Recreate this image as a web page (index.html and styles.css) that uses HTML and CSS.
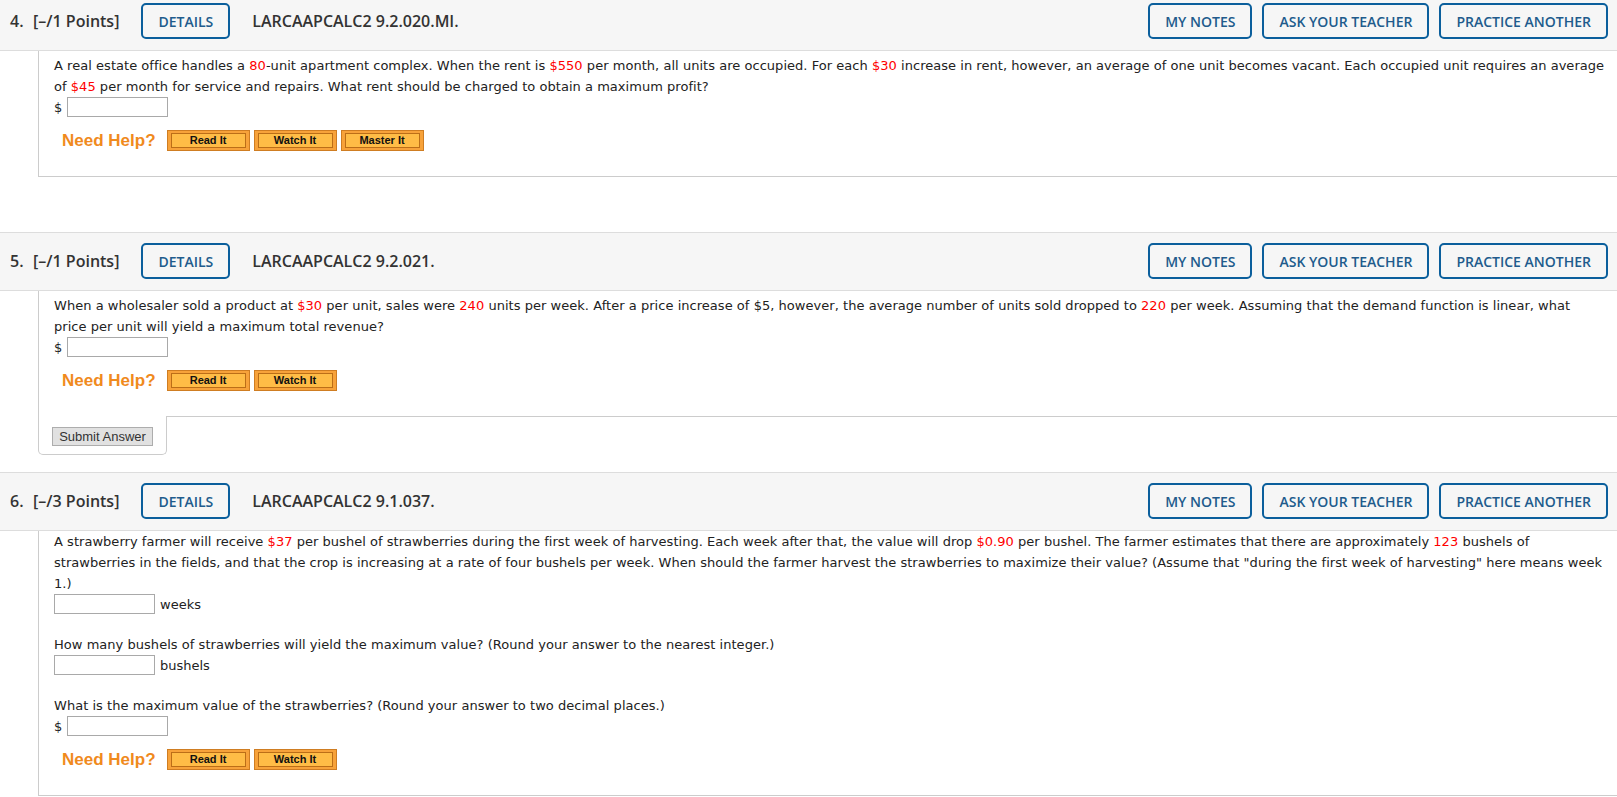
FILE: index.html
```html
<!DOCTYPE html>
<html lang="en">
<head>
<meta charset="utf-8">
<title>Assignment</title>
<link rel="stylesheet" href="styles.css">
</head>
<body>
<div class="page">

  <section class="question">
    <header class="q-head">
      <span class="q-num">4.</span>
      <span class="q-points">[–/1 Points]</span>
      <button class="btn-outline details">DETAILS</button>
      <span class="q-code">LARCAAPCALC2 9.2.020.MI.</span>
      <div class="q-actions">
        <button class="btn-outline">MY NOTES</button>
        <button class="btn-outline">ASK YOUR TEACHER</button>
        <button class="btn-outline">PRACTICE ANOTHER</button>
      </div>
    </header>
    <div class="q-body">
      <p class="q-text">A real estate office handles a <span class="red">80</span>-unit apartment complex. When the rent is <span class="red">$550</span> per month, all units are occupied. For each <span class="red">$30</span> increase in rent, however, an average of one unit becomes vacant. Each occupied unit requires an average of <span class="red">$45</span> per month for service and repairs. What rent should be charged to obtain a maximum profit?</p>
      <div class="answer-row"><span class="dollar">$</span><input class="ans" type="text"></div>
      <div class="help-row">
        <span class="need-help">Need Help?</span>
        <span class="help-btn"><span>Read It</span></span>
        <span class="help-btn"><span>Watch It</span></span>
        <span class="help-btn"><span>Master It</span></span>
      </div>
    </div>
  </section>

  <section class="question q-gap">
    <header class="q-head">
      <span class="q-num">5.</span>
      <span class="q-points">[–/1 Points]</span>
      <button class="btn-outline details">DETAILS</button>
      <span class="q-code">LARCAAPCALC2 9.2.021.</span>
      <div class="q-actions">
        <button class="btn-outline">MY NOTES</button>
        <button class="btn-outline">ASK YOUR TEACHER</button>
        <button class="btn-outline">PRACTICE ANOTHER</button>
      </div>
    </header>
    <div class="q-body open">
      <p class="q-text">When a wholesaler sold a product at <span class="red">$30</span> per unit, sales were <span class="red">240</span> units per week. After a price increase of $5, however, the average number of units sold dropped to <span class="red">220</span> per week. Assuming that the demand function is linear, what price per unit will yield a maximum total revenue?</p>
      <div class="answer-row"><span class="dollar">$</span><input class="ans" type="text"></div>
      <div class="help-row">
        <span class="need-help">Need Help?</span>
        <span class="help-btn"><span>Read It</span></span>
        <span class="help-btn"><span>Watch It</span></span>
      </div>
    </div>
    <div class="submit-row">
      <div class="submit-tab"><button class="submit-btn">Submit Answer</button></div>
      <div class="submit-fill"></div>
    </div>
  </section>

  <section class="question q-gap-small">
    <header class="q-head">
      <span class="q-num">6.</span>
      <span class="q-points">[–/3 Points]</span>
      <button class="btn-outline details">DETAILS</button>
      <span class="q-code">LARCAAPCALC2 9.1.037.</span>
      <div class="q-actions">
        <button class="btn-outline">MY NOTES</button>
        <button class="btn-outline">ASK YOUR TEACHER</button>
        <button class="btn-outline">PRACTICE ANOTHER</button>
      </div>
    </header>
    <div class="q-body multi">
      <p class="q-text">A strawberry farmer will receive <span class="red">$37</span> per bushel of strawberries during the first week of harvesting. Each week after that, the value will drop <span class="red">$0.90</span> per bushel. The farmer estimates that there are approximately <span class="red">123</span> bushels of strawberries in the fields, and that the crop is increasing at a rate of four bushels per week. When should the farmer harvest the strawberries to maximize their value? (Assume that "during the first week of harvesting" here means week 1.)</p>
      <div class="answer-row"><input class="ans" type="text"><span class="unit">weeks</span></div>
      <p class="q-text sub">How many bushels of strawberries will yield the maximum value? (Round your answer to the nearest integer.)</p>
      <div class="answer-row"><input class="ans" type="text"><span class="unit">bushels</span></div>
      <p class="q-text sub">What is the maximum value of the strawberries? (Round your answer to two decimal places.)</p>
      <div class="answer-row"><span class="dollar">$</span><input class="ans" type="text"></div>
      <div class="help-row">
        <span class="need-help">Need Help?</span>
        <span class="help-btn"><span>Read It</span></span>
        <span class="help-btn"><span>Watch It</span></span>
      </div>
    </div>
  </section>

</div>
</body>
</html>
```

FILE: styles.css
```css
* { box-sizing: border-box; }

body {
  margin: 0;
  background: #ffffff;
  font-family: "DejaVu Sans", Verdana, sans-serif;
  font-size: 13px;
  color: #222222;
}

.page {
  margin-top: -8px;
}

.q-gap { margin-top: 55px; }
.q-gap-small { margin-top: 17px; }

.q-head {
  display: flex;
  align-items: center;
  background: #f6f6f6;
  border-top: 1px solid #dddddd;
  border-bottom: 1px solid #dddddd;
  padding: 10px 9px 11px 10px;
  font-family: "Open Sans", sans-serif;
  color: #333333;
}

.q-num {
  font-weight: 600;
  font-size: 16px;
  width: 23px;
}

.q-points {
  font-weight: 600;
  font-size: 16px;
}

.btn-outline {
  height: 36px;
  border: 2px solid #0b5f9c;
  border-radius: 5px;
  background: transparent;
  color: #215b8c;
  font-family: "Open Sans", sans-serif;
  font-weight: 600;
  font-size: 14px;
  padding: 0 15px;
  margin: 0;
  text-transform: uppercase;
}

.details { margin-left: 22px; }

.q-code {
  margin-left: 22px;
  font-weight: 600;
  font-size: 16px;
}

.q-actions {
  margin-left: auto;
  display: flex;
  gap: 10px;
}

.q-body {
  margin-left: 38px;
  border-left: 1px solid #cccccc;
  border-bottom: 1px solid #cccccc;
  padding: 4px 12px 25px 15px;
}

.q-body.open { border-bottom: none; }
.q-body.multi { padding-top: 0; }

.q-text {
  margin: 0;
  line-height: 21px;
  letter-spacing: 0.035px;
}

.q-text.sub { margin-top: 20px; }

.red { color: #ff0000; }

.answer-row {
  display: flex;
  align-items: center;
  height: 20px;
}

.dollar { margin-right: 5px; }

.ans {
  width: 101px;
  height: 20px;
  margin: 0;
  padding: 0 2px;
  border: 1px solid #a9a9a9;
  background: #ffffff;
}

.unit { margin-left: 5px; }

.help-row {
  display: flex;
  align-items: center;
  height: 21px;
  margin-top: 13px;
  padding-left: 8px;
}

.need-help {
  font-family: "Liberation Sans", Arial, sans-serif;
  font-weight: bold;
  font-size: 17px;
  color: #f08a1d;
  margin-right: 11px;
}

.help-btn {
  width: 83px;
  height: 21px;
  border: 1px solid #cf7d22;
  background: #f7a23a;
  padding: 2px 3px;
  margin-right: 4px;
}

.help-btn span {
  display: block;
  height: 15px;
  border: 1px solid #bc6e17;
  background: #ffbc46;
  font-family: "Liberation Sans", Arial, sans-serif;
  font-weight: bold;
  font-size: 11px;
  line-height: 13px;
  text-align: center;
  color: #111111;
}

.submit-row {
  display: flex;
  margin-left: 38px;
}

.submit-tab {
  border: 1px solid #cccccc;
  border-top: none;
  border-radius: 0 0 5px 5px;
  padding: 11px 13px 8px 13px;
}

.submit-fill {
  flex: 1;
  border-top: 1px solid #cccccc;
}

.submit-btn {
  display: block;
  width: 101px;
  height: 19px;
  margin: 0;
  padding: 0;
  font-family: "Liberation Sans", Arial, sans-serif;
  font-size: 13px;
  color: #333333;
  background: #e1e1e1;
  border: 1px solid #adadad;
  border-radius: 0;
}
```
